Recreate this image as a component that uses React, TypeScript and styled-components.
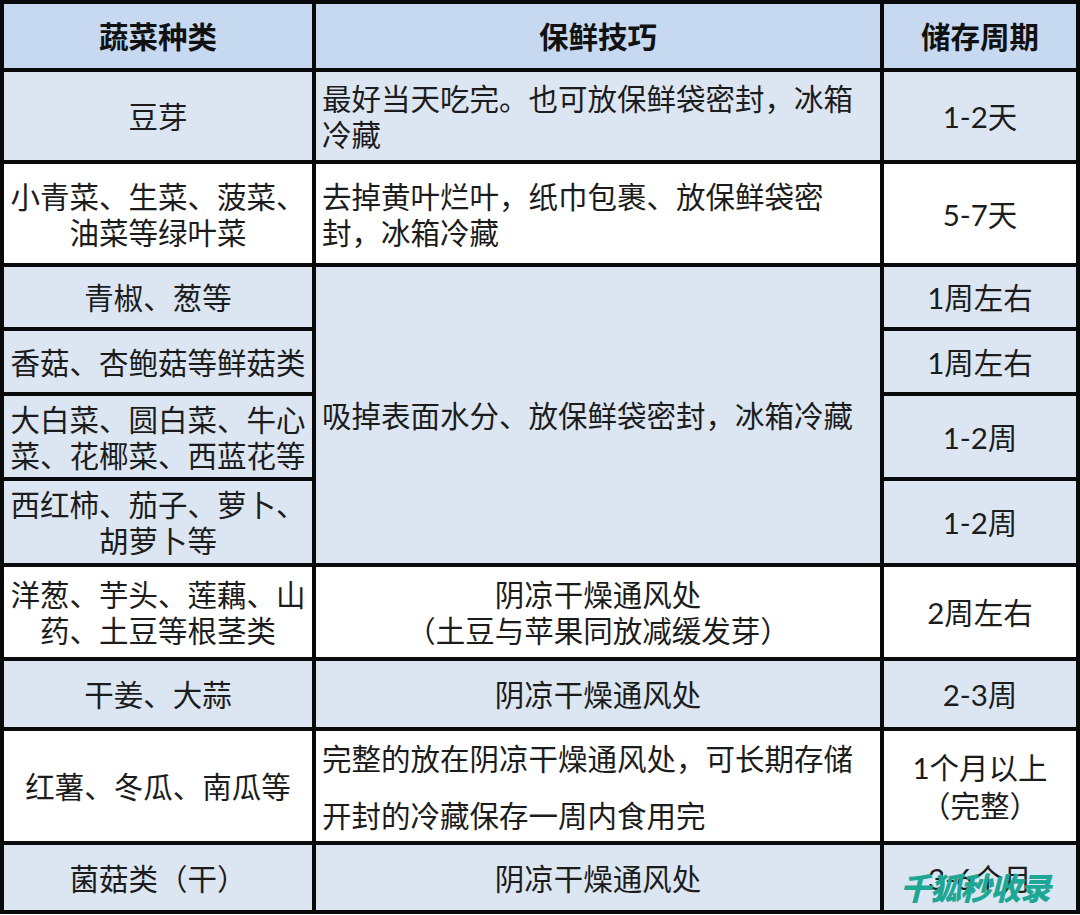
import { FC, ReactNode } from 'react';
import styled, { createGlobalStyle } from 'styled-components';

const GlobalStyle = createGlobalStyle`
  html, body {
    margin: 0;
    padding: 0;
    background: #ffffff;
  }
`;

type Tone = 'head' | 'blue' | 'white';

const tones: Record<Tone, string> = {
  head: '#c6d9f1',
  blue: '#dce6f2',
  white: '#ffffff',
};

const Table = styled.div`
  position: relative;
  display: grid;
  width: 1080px;
  box-sizing: border-box;
  grid-template-columns: 308px 564px 192px;
  grid-template-rows: 64px 88px 99px 60px 61px 81px 82px 90px 66px 110px 65px;
  gap: 4px;
  padding: 4px;
  background: #0a0a0a;
  font-family: 'Lato', 'Noto Sans CJK SC', sans-serif;
  color: #1c1c1c;
`;

const Cell = styled.div<{ $tone: Tone; $align?: 'left' | 'center'; $span?: number }>`
  display: flex;
  align-items: center;
  justify-content: ${({ $align }) => ($align === 'left' ? 'flex-start' : 'center')};
  grid-row: ${({ $span }) => ($span ? `span ${$span}` : 'auto')};
  padding: 2px ${({ $align }) => ($align === 'left' ? '6px' : '0')} 0;
  background: ${({ $tone }) => tones[$tone]};
  font-size: 29.5px;
  line-height: 36px;
  text-align: ${({ $align }) => $align ?? 'center'};
  white-space: nowrap;
`;

const HeadCell = styled(Cell)`
  font-weight: 700;
  color: #111;
`;

const Lines = styled.div<{ $gap?: number }>`
  display: flex;
  flex-direction: column;
  gap: ${({ $gap }) => $gap ?? 0}px;
`;

// the site's stamp sits over the last cell
const Watermark = styled.div`
  position: absolute;
  left: 900px;
  top: 869px;
  font-family: 'Noto Sans CJK SC', sans-serif;
  font-size: 31px;
  font-weight: 900;
  font-style: italic;
  letter-spacing: -1px;
  color: #1fa796;
  line-height: 36px;
`;

type Row = {
  name: string[];
  tip?: { lines: string[]; align: 'left' | 'center'; gap?: number; span?: number };
  period: string[];
  tone: Tone;
};

const rows: Row[] = [
  {
    name: ['豆芽'],
    tip: { lines: ['最好当天吃完。也可放保鲜袋密封，冰箱', '冷藏'], align: 'left' },
    period: ['1-2天'],
    tone: 'blue',
  },
  {
    name: ['小青菜、生菜、菠菜、', '油菜等绿叶菜'],
    tip: { lines: ['去掉黄叶烂叶，纸巾包裹、放保鲜袋密', '封，冰箱冷藏'], align: 'left' },
    period: ['5-7天'],
    tone: 'white',
  },
  {
    name: ['青椒、葱等'],
    tip: { lines: ['吸掉表面水分、放保鲜袋密封，冰箱冷藏'], align: 'left', span: 4 },
    period: ['1周左右'],
    tone: 'blue',
  },
  { name: ['香菇、杏鲍菇等鲜菇类'], period: ['1周左右'], tone: 'blue' },
  { name: ['大白菜、圆白菜、牛心', '菜、花椰菜、西蓝花等'], period: ['1-2周'], tone: 'blue' },
  { name: ['西红柿、茄子、萝卜、', '胡萝卜等'], period: ['1-2周'], tone: 'blue' },
  {
    name: ['洋葱、芋头、莲藕、山', '药、土豆等根茎类'],
    tip: { lines: ['阴凉干燥通风处', '（土豆与苹果同放减缓发芽）'], align: 'center' },
    period: ['2周左右'],
    tone: 'white',
  },
  {
    name: ['干姜、大蒜'],
    tip: { lines: ['阴凉干燥通风处'], align: 'center' },
    period: ['2-3周'],
    tone: 'blue',
  },
  {
    name: ['红薯、冬瓜、南瓜等'],
    tip: {
      lines: ['完整的放在阴凉干燥通风处，可长期存储', '开封的冷藏保存一周内食用完'],
      align: 'left',
      gap: 21,
    },
    period: ['1个月以上', '（完整）'],
    tone: 'white',
  },
  {
    name: ['菌菇类（干）'],
    tip: { lines: ['阴凉干燥通风处'], align: 'center' },
    period: ['3-6个月'],
    tone: 'blue',
  },
];

const Stack: FC<{ lines: string[]; gap?: number }> = ({ lines, gap }) => (
  <Lines $gap={gap}>
    {lines.map((l) => (
      <span key={l}>{l}</span>
    ))}
  </Lines>
);

const Header: FC<{ children: ReactNode }> = ({ children }) => <HeadCell $tone="head">{children}</HeadCell>;

export default function App() {
  return (
    <>
      <GlobalStyle />
      <Table>
        <Header>蔬菜种类</Header>
        <Header>保鲜技巧</Header>
        <Header>储存周期</Header>
        {rows.map((r) => [
          <Cell key={r.name[0] + '-n'} $tone={r.tone}>
            <Stack lines={r.name} />
          </Cell>,
          r.tip && (
            <Cell key={r.name[0] + '-t'} $tone={r.tone} $align={r.tip.align} $span={r.tip.span}>
              <Stack lines={r.tip.lines} gap={r.tip.gap} />
            </Cell>
          ),
          <Cell key={r.name[0] + '-p'} $tone={r.tone}>
            <Stack lines={r.period} gap={r.period.length > 1 ? 2 : 0} />
          </Cell>,
        ])}
        <Watermark>千狐秒收录</Watermark>
      </Table>
    </>
  );
}
